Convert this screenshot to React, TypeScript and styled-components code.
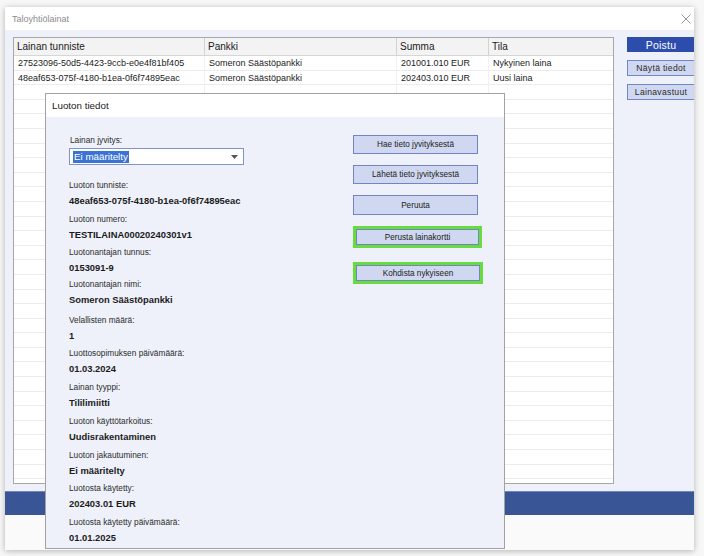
import React from "react";
import styled, { createGlobalStyle } from "styled-components";

const Global = createGlobalStyle`
  html, body { margin: 0; padding: 0; background: #f7f7f7; }
  body { font-family: "Liberation Sans", Arial, sans-serif; color: #1b1b1b; }
  * { box-sizing: border-box; }
`;

const Page = styled.div`
  width: 704px;
  height: 556px;
  padding: 7px 0 0 5px;
  overflow: hidden;
  background: #f7f7f7;
`;

const Window = styled.div`
  position: relative;
  width: 689px;
  height: 543px;
  display: flex;
  flex-direction: column;
  background: #fff;
  box-shadow: 0 1px 6px rgba(0, 0, 0, 0.28);
  overflow: hidden;
`;

const TitleBar = styled.div`
  flex: none;
  height: 23px;
  display: flex;
  align-items: center;
  justify-content: space-between;
  padding: 0 3px 0 7px;
  font-size: 9px;
  color: #8c8c8c;
  background: #fff;
`;

const Main = styled.div`
  flex: none;
  height: 461px;
  display: flex;
  gap: 13px;
  padding: 7px 0 0 8px;
  background: #eef1f9;
`;

const Table = styled.div`
  flex: none;
  width: 601px;
  height: 447px;
  border: 1px solid #a7a7a7;
  background: #fff;
  overflow: hidden;
`;

const cols = "191px 192px 92px 1fr";

const HeadRow = styled.div`
  display: grid;
  grid-template-columns: ${cols};
  height: 18px;
  background: #f3f3f3;
  border-bottom: 1px solid #d6d6d6;
`;

const HeadCell = styled.div`
  padding-left: 3px;
  font-size: 10px;
  line-height: 17px;
  color: #1b1b1b;
  border-right: 1px solid #d2d2d2;
  &:last-child { border-right: none; }
`;

const Row = styled.div`
  display: grid;
  grid-template-columns: ${cols};
  height: 14.6px;
  border-bottom: 1px solid #ececec;
`;

const Cell = styled.div`
  padding-left: 4px;
  font-size: 9px;
  line-height: 14px;
  color: #1b1b1b;
  white-space: nowrap;
  border-right: 1px solid #f1f1f1;
  &:last-child { border-right: none; }
`;

const Side = styled.div`
  flex: none;
  width: 72px;
  display: flex;
  flex-direction: column;
  gap: 8px;
`;

const SideButton = styled.div<{ $primary?: boolean }>`
  height: ${(p) => (p.$primary ? "15px" : "16px")};
  display: flex;
  align-items: center;
  justify-content: center;
  padding-right: 4px;
  font-size: ${(p) => (p.$primary ? "10.5px" : "8.6px")};
  letter-spacing: ${(p) => (p.$primary ? "0.2px" : "0.3px")};
  color: ${(p) => (p.$primary ? "#ffffff" : "#2a2a2a")};
  background: ${(p) => (p.$primary ? "#2d4dad" : "#cfd8f0")};
  border: 1px solid ${(p) => (p.$primary ? "#2d4dad" : "#7387c6")};
`;

const Band = styled.div`
  flex: none;
  height: 24px;
  background: #3a5596;
  border-top: 1px solid #7085bd;
`;

const Footer = styled.div`
  flex: 1;
  background: #fafafa;
`;

const Dialog = styled.div`
  position: absolute;
  left: 40px;
  top: 86px;
  width: 460px;
  height: 456px;
  display: flex;
  flex-direction: column;
  border: 1px solid #a2a2a2;
  background: #eef1f9;
`;

const DialogTitle = styled.div`
  flex: none;
  height: 23px;
  display: flex;
  align-items: center;
  padding-left: 6px;
  font-size: 9.8px;
  color: #1b1b1b;
  background: #fff;
`;

const DialogBody = styled.div`
  flex: 1;
  display: grid;
  grid-template-columns: 284px 1fr;
  padding-left: 23px;
`;

const Fields = styled.div`
  display: flex;
  flex-direction: column;
  padding-top: 18px;
`;

const Label = styled.div<{ $indent?: boolean }>`
  font-size: 8.3px;
  line-height: 11px;
  color: #2c2c2c;
  padding-left: ${(p) => (p.$indent ? "1px" : "0")};
`;

const Value = styled.div`
  margin-top: 4px;
  font-size: 9.4px;
  line-height: 12px;
  font-weight: bold;
  color: #1b1b1b;
  white-space: nowrap;
`;

const Field = styled.div<{ $top: number }>`
  margin-top: ${(p) => p.$top}px;
`;

const Select = styled.div`
  margin-top: 2px;
  width: 175px;
  height: 17px;
  display: flex;
  align-items: center;
  justify-content: space-between;
  padding: 0 5px 0 3px;
  background: #fff;
  border: 1px solid #8193c9;
`;

const Selected = styled.span`
  font-size: 9.8px;
  line-height: 12px;
  padding: 0 1px;
  color: #fff;
  background: #3a73d3;
`;

const Buttons = styled.div`
  display: flex;
  flex-direction: column;
  align-items: flex-start;
  gap: 11px;
  padding-top: 18px;
`;

const DlgButton = styled.div<{ $h?: number; $w?: number }>`
  width: ${(p) => p.$w ?? 125}px;
  height: ${(p) => p.$h ?? 19}px;
  display: flex;
  align-items: center;
  justify-content: center;
  font-size: 8.2px;
  color: #222;
  background: #cfd8f0;
  border: 1px solid #7184c5;
`;

const Highlight = styled.div<{ $top?: number }>`
  margin-top: ${(p) => p.$top ?? 0}px;
  border: 3px solid #66dd3d;
  display: flex;
`;

const rows = [
  ["27523096-50d5-4423-9ccb-e0e4f81bf405", "Someron Säästöpankki", "201001.010 EUR", "Nykyinen laina"],
  ["48eaf653-075f-4180-b1ea-0f6f74895eac", "Someron Säästöpankki", "202403.010 EUR", "Uusi laina"],
];

const fields: [string, string, number][] = [
  ["Luoton tunniste:", "48eaf653-075f-4180-b1ea-0f6f74895eac", 15],
  ["Luoton numero:", "TESTILAINA00020240301v1", 7],
  ["Luotonantajan tunnus:", "0153091-9", 6],
  ["Luotonantajan nimi:", "Someron Säästöpankki", 5],
  ["Velallisten määrä:", "1", 9],
  ["Luottosopimuksen päivämäärä:", "01.03.2024", 6],
  ["Lainan tyyppi:", "Tililimiitti", 7],
  ["Luoton käyttötarkoitus:", "Uudisrakentaminen", 7],
  ["Luoton jakautuminen:", "Ei määritelty", 7],
  ["Luotosta käytetty:", "202403.01 EUR", 6],
  ["Luotosta käytetty päivämäärä:", "01.01.2025", 7],
];

const CloseIcon = () => (
  <svg width="10" height="10" viewBox="0 0 10 10">
    <path d="M0.5 0.5 L9.5 9.5 M9.5 0.5 L0.5 9.5" stroke="#9a9a9a" strokeWidth="1" fill="none" />
  </svg>
);

const Arrow = () => (
  <svg width="7" height="4" viewBox="0 0 7 4">
    <path d="M0 0 H7 L3.5 4 Z" fill="#555" />
  </svg>
);

export default function App() {
  const empty = Array.from({ length: 30 });
  return (
    <Page>
      <Global />
      <Window>
        <TitleBar>
          <span>Taloyhtiölainat</span>
          <CloseIcon />
        </TitleBar>
        <Main>
          <Table>
            <HeadRow>
              <HeadCell>Lainan tunniste</HeadCell>
              <HeadCell>Pankki</HeadCell>
              <HeadCell>Summa</HeadCell>
              <HeadCell>Tila</HeadCell>
            </HeadRow>
            {rows.map((r, i) => (
              <Row key={i}>
                {r.map((c, j) => (
                  <Cell key={j}>{c}</Cell>
                ))}
              </Row>
            ))}
            {empty.map((_, i) => (
              <Row key={"e" + i}>
                <Cell />
                <Cell />
                <Cell />
                <Cell />
              </Row>
            ))}
          </Table>
          <Side>
            <SideButton $primary>Poistu</SideButton>
            <SideButton>Näytä tiedot</SideButton>
            <SideButton>Lainavastuut</SideButton>
          </Side>
        </Main>
        <Band />
        <Footer />
        <Dialog>
          <DialogTitle>Luoton tiedot</DialogTitle>
          <DialogBody>
            <Fields>
              <Label $indent>Lainan jyvitys:</Label>
              <Select>
                <Selected>Ei määritelty</Selected>
                <Arrow />
              </Select>
              {fields.map(([l, v, t]) => (
                <Field key={l} $top={t}>
                  <Label>{l}</Label>
                  <Value>{v}</Value>
                </Field>
              ))}
            </Fields>
            <Buttons>
              <DlgButton>Hae tieto jyvityksestä</DlgButton>
              <DlgButton>Lähetä tieto jyvityksestä</DlgButton>
              <DlgButton $h={20}>Peruuta</DlgButton>
              <Highlight>
                <DlgButton $h={16} $w={123}>Perusta lainakortti</DlgButton>
              </Highlight>
              <Highlight $top={3}>
                <DlgButton $h={16} $w={124}>Kohdista nykyiseen</DlgButton>
              </Highlight>
            </Buttons>
          </DialogBody>
        </Dialog>
      </Window>
    </Page>
  );
}
